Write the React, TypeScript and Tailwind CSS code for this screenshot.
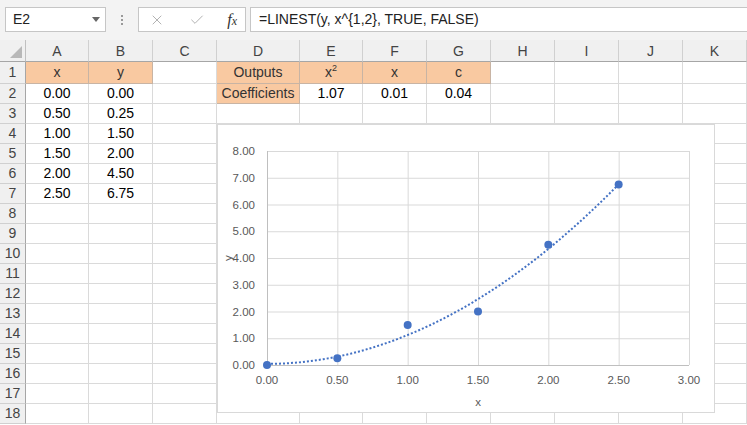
import { X, Check } from 'lucide-react'

const cols = ['A', 'B', 'C', 'D', 'E', 'F', 'G', 'H', 'I', 'J', 'K']

type Cell = { v?: React.ReactNode; orange?: boolean }

const rows: Record<number, Record<string, Cell>> = {
  1: {
    A: { v: 'x', orange: true },
    B: { v: 'y', orange: true },
    D: { v: 'Outputs', orange: true },
    E: {
      v: (
        <span>
          x<sup className="text-[9px] -top-[6px]">2</sup>
        </span>
      ),
      orange: true,
    },
    F: { v: 'x', orange: true },
    G: { v: 'c', orange: true },
  },
  2: {
    A: { v: '0.00' },
    B: { v: '0.00' },
    D: { v: 'Coefficients', orange: true },
    E: { v: '1.07' },
    F: { v: '0.01' },
    G: { v: '0.04' },
  },
  3: { A: { v: '0.50' }, B: { v: '0.25' } },
  4: { A: { v: '1.00' }, B: { v: '1.50' } },
  5: { A: { v: '1.50' }, B: { v: '2.00' } },
  6: { A: { v: '2.00' }, B: { v: '4.50' } },
  7: { A: { v: '2.50' }, B: { v: '6.75' } },
}

const points = [
  [0, 0],
  [0.5, 0.25],
  [1, 1.5],
  [1.5, 2],
  [2, 4.5],
  [2.5, 6.75],
]

// plot area inside the chart box
const X0 = 50
const X1 = 472
const Y0 = 241
const YT = 27
const sx = (X1 - X0) / 3
const sy = (Y0 - YT) / 8
const px = (x: number) => X0 + x * sx
const py = (y: number) => Y0 - y * sy

const trend = Array.from({ length: 51 }, (_, i) => {
  const x = i * 0.05
  const y = 1.07 * x * x + 0.01 * x + 0.04
  return `${i === 0 ? 'M' : 'L'}${px(x).toFixed(1)},${py(y).toFixed(1)}`
}).join(' ')

function Chart() {
  return (
    <div className="absolute left-[217px] top-[124px] w-[498px] h-[289px] bg-white border border-[#d9d9d9]">
      <svg width="498" height="289" className="absolute -left-[1px] -top-[1px]">
        {[0, 1, 2, 3, 4, 5, 6, 7, 8].map((v) => (
          <line key={'h' + v} x1={X0} x2={X1} y1={py(v) + 0.5} y2={py(v) + 0.5} stroke="#d9d9d9" />
        ))}
        {[0, 0.5, 1, 1.5, 2, 2.5, 3].map((v) => (
          <line key={'v' + v} x1={px(v) + 0.5} x2={px(v) + 0.5} y1={YT} y2={Y0} stroke="#d9d9d9" />
        ))}
        <line x1={X0 + 0.5} x2={X0 + 0.5} y1={YT} y2={Y0} stroke="#bfbfbf" />
        <line x1={X0} x2={X1} y1={Y0 + 0.5} y2={Y0 + 0.5} stroke="#bfbfbf" />
        {[0, 1, 2, 3, 4, 5, 6, 7, 8].map((v) => (
          <text
            key={'yl' + v}
            x={38}
            y={py(v) + 4}
            textAnchor="end"
            fontSize="11.5"
            fill="#595959"
            fontFamily="'Liberation Sans', sans-serif"
          >
            {v.toFixed(2)}
          </text>
        ))}
        {[0, 0.5, 1, 1.5, 2, 2.5, 3].map((v) => (
          <text
            key={'xl' + v}
            x={px(v)}
            y={260}
            textAnchor="middle"
            fontSize="11.5"
            fill="#595959"
            fontFamily="'Liberation Sans', sans-serif"
          >
            {v.toFixed(2)}
          </text>
        ))}
        <text x={261} y={282} textAnchor="middle" fontSize="11.5" fill="#595959" fontFamily="'Liberation Sans', sans-serif">
          x
        </text>
        <text
          x={0}
          y={0}
          textAnchor="middle"
          fontSize="11.5"
          fill="#595959"
          fontFamily="'Liberation Sans', sans-serif"
          transform="translate(15 134) rotate(-90)"
        >
          y
        </text>
        <path d={trend} fill="none" stroke="#4472c4" strokeWidth="2" strokeDasharray="2 2" />
        {points.map(([x, y]) => (
          <circle key={x} cx={px(x)} cy={py(y)} r="4" fill="#4472c4" />
        ))}
      </svg>
    </div>
  )
}

export default function App() {
  return (
    <div className="relative w-[747px] h-[425px] overflow-hidden bg-white text-black font-['Liberation_Sans',sans-serif]">
      {/* formula bar */}
      <div className="h-[40px] bg-[#f3f3f3] flex items-start pt-[7px] pl-[5px]">
        <div className="w-[101px] h-[25px] bg-white border border-[#c6c6c6] flex items-center pl-[7px] pr-[5px] text-[14px] text-[#222]">
          <span className="flex-1">E2</span>
          <span className="w-0 h-0 border-l-[4px] border-r-[4px] border-t-[5px] border-l-transparent border-r-transparent border-t-[#666]" />
        </div>
        <div className="w-[32px] h-[25px] flex flex-col items-center justify-center gap-[2px]">
          <span className="w-[2px] h-[2px] bg-[#999]" />
          <span className="w-[2px] h-[2px] bg-[#999]" />
          <span className="w-[2px] h-[2px] bg-[#999]" />
        </div>
        <div className="w-[108px] h-[25px] bg-white border border-[#c6c6c6] flex items-center pl-[10px] pr-[8px]">
          <X size={16} strokeWidth={1.3} className="text-[#a6a6a6]" />
          <Check size={16} strokeWidth={1.3} className="text-[#a6a6a6] ml-[24px]" />
          <span className="ml-auto text-[16px] italic font-['Liberation_Serif',serif] text-[#333]">
            f<span className="text-[12px]">x</span>
          </span>
        </div>
        <div className="flex-1 ml-[4px] h-[25px] bg-white border border-[#c6c6c6] border-r-0 flex items-center pl-[8px] text-[14px] text-[#222]">
          =LINEST(y, x^{'{'}1,2{'}'}, TRUE, FALSE)
        </div>
      </div>

      {/* sheet */}
      <div className="grid grid-cols-[26px_63px_64px_64px_83px_63px_64px_64px_64px_64px_64px_64px] grid-rows-[22px_22px_repeat(17,20px)]">
        <div className="relative bg-[#f0f0f0] border-r border-b border-[#c0c0c0] border-b-[#a6a6a6]">
          <span className="absolute right-[3px] bottom-[3px] w-0 h-0 border-solid border-[0_0_12px_12px] border-[transparent_transparent_#b8b8b8_transparent]" />
        </div>
        {cols.map((c) => (
          <div
            key={c}
            className="bg-[#f0f0f0] border-r border-b border-[#d0d0d0] border-b-[#a6a6a6] flex items-center justify-center text-[14px] text-[#444] pt-[1px]"
          >
            {c}
          </div>
        ))}
        {Array.from({ length: 18 }, (_, i) => i + 1).map((r) => (
          <Row key={r} r={r} />
        ))}
      </div>

      <Chart />
    </div>
  )
}

function Row({ r }: { r: number }) {
  const data = rows[r] || {}
  return (
    <>
      <div className="bg-[#f0f0f0] border-r border-b border-[#d0d0d0] border-r-[#a6a6a6] flex items-center justify-center text-[14px] text-[#444]">
        {r}
      </div>
      {cols.map((c) => {
        const cell = data[c]
        return (
          <div
            key={c}
            className={
              cell?.orange
                ? 'bg-[#f9c9a1] border-r border-b border-[#c8b4a4] flex items-center justify-center text-[14px] text-[#333] whitespace-nowrap overflow-hidden'
                : 'border-r border-b border-[#dadada] flex items-center justify-center text-[14px] text-black whitespace-nowrap overflow-hidden'
            }
          >
            {cell?.v}
          </div>
        )
      })}
    </>
  )
}
